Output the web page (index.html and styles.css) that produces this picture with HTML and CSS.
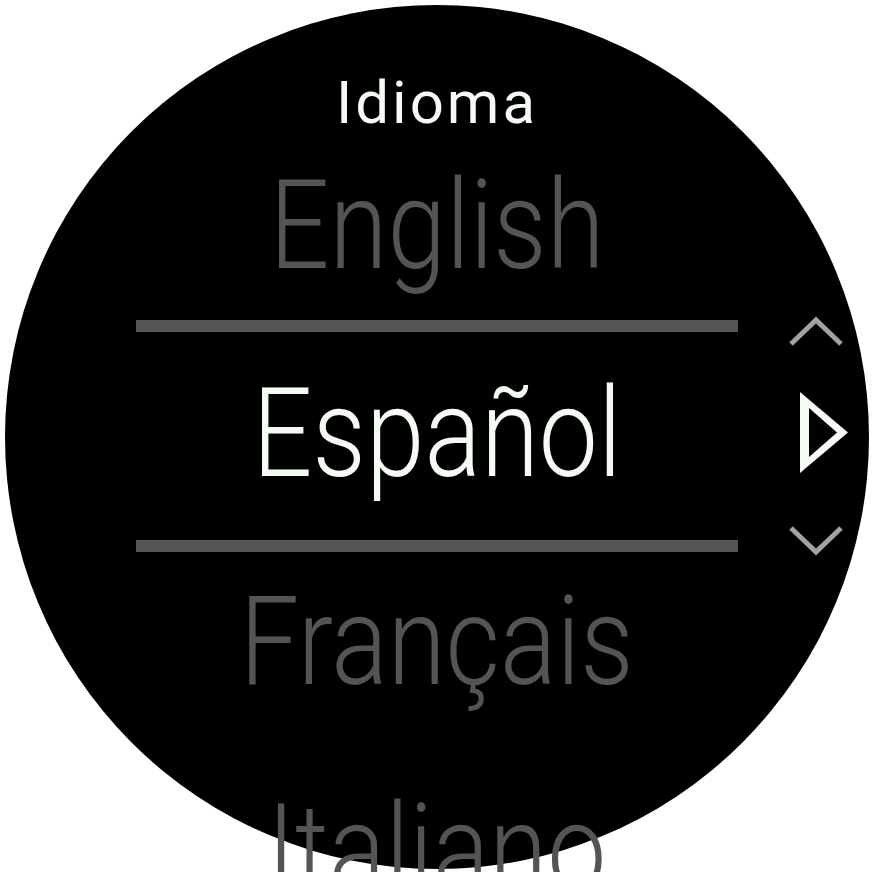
FILE: index.html
```html
<!DOCTYPE html>
<html>
<head>
	<meta charset="utf-8">
	<meta name="viewport" content="width=device-width, initial-scale=1">
	<title>Idioma</title>
	<link rel="stylesheet" href="styles.css">
</head>
<body>
	<div class="watch">
		<div class="title">Idioma</div>
		<div class="list">
			<div class="item"><span>English</span></div>
			<div class="item selected"><span>Español</span></div>
			<div class="item"><span>Français</span></div>
			<div class="item"><span>Italiano</span></div>
		</div>
		<svg class="scroller" width="75" height="255" viewBox="0 0 75 255">
			<polyline class="chevron" points="11,34 36,10 61,34"></polyline>
			<path class="play" fill-rule="evenodd" d="M20 82 L20 163 L68 122.5 Z M29 98 L29 147 L57 122.5 Z"></path>
			<polyline class="chevron" points="11,218 36,242 61,218"></polyline>
		</svg>
	</div>
</body>
</html>
```

FILE: styles.css
```css
html, body {
	margin: 0;
	padding: 0;
	overflow: hidden;
	background-color: #fff;
}
body {
	font-family: Roboto, "Liberation Sans", sans-serif;
}
.watch {
	position: relative;
	width: 864px;
	height: 864px;
	margin: 5px;
	padding-top: 79px;
	box-sizing: border-box;
	border-radius: 50%;
	background-color: #000;
}
.title {
	font-size: 60px;
	line-height: 37px;
	font-weight: 400;
	letter-spacing: 3px;
	color: #f4fbf3;
	text-align: center;
	margin-bottom: 3px;
}
.list {
	display: flex;
	flex-direction: column;
}
.item {
	height: 208px;
	line-height: 204px;
	padding-bottom: 4px;
	box-sizing: border-box;
	text-align: center;
	font-size: 124px;
	font-weight: 300;
	color: #535552;
	white-space: nowrap;
}
.item span {
	display: inline-block;
	transform: scaleX(0.85);
}
.item.selected {
	height: 232px;
	margin: -12px 131px;
	border-top: 12px solid #545653;
	border-bottom: 12px solid #545653;
	color: #f4fbf3;
	padding-bottom: 4px;
}
.scroller {
	position: absolute;
	left: 775px;
	top: 305px;
}
.chevron {
	fill: none;
	stroke: #9ea39e;
	stroke-width: 5;
}
.play {
	fill: #f4fbf3;
}
```
